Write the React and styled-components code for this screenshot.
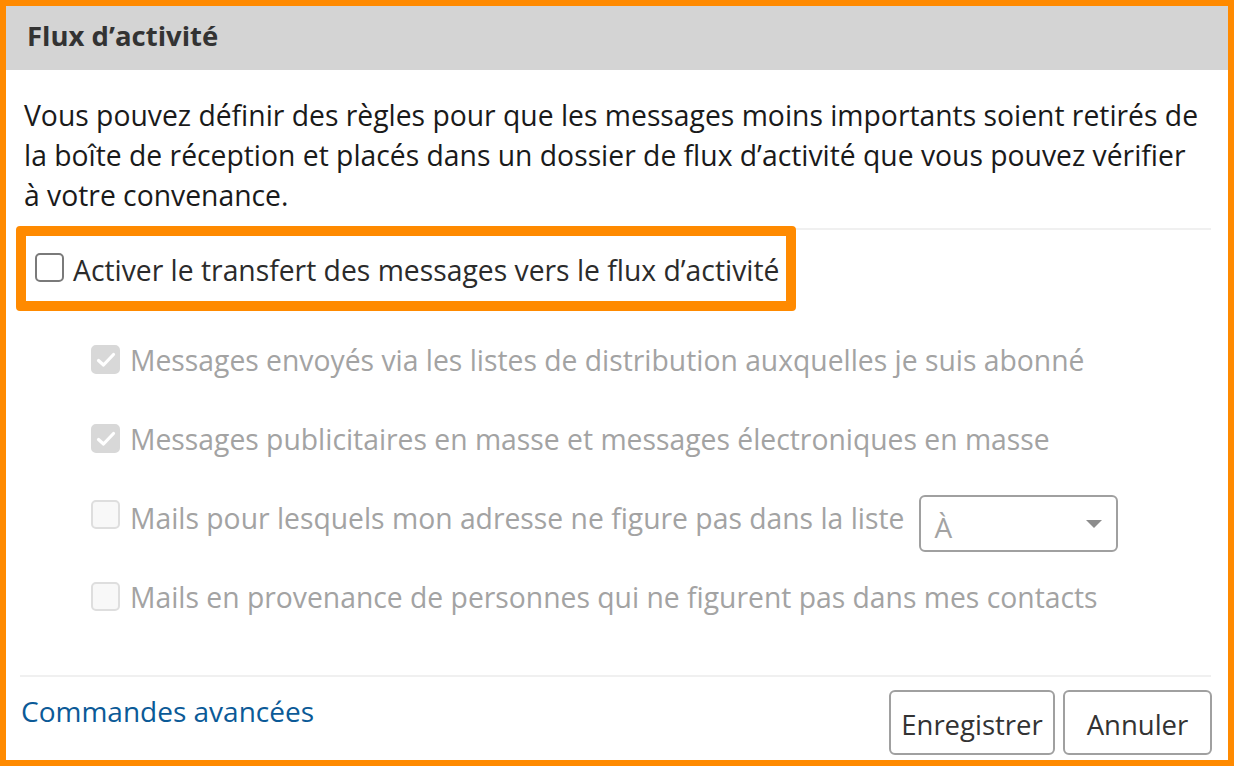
import React, { useState } from 'react';
import styled, { createGlobalStyle } from 'styled-components';

const GlobalStyle = createGlobalStyle`
  html, body {
    margin: 0;
    padding: 0;
    background: #ffffff;
  }
  body {
    font-family: "Open Sans", "Noto Sans", sans-serif;
  }
`;

const Frame = styled.div`
  width: 1234px;
  height: 766px;
  box-sizing: border-box;
  border: 6px solid #ff8a00;
  background: #ffffff;
  display: flex;
  flex-direction: column;
  overflow: hidden;
`;

const Header = styled.div`
  height: 64px;
  flex: none;
  background: #d4d4d4;
  display: flex;
  align-items: center;
  padding: 0 0 6px 21px;
  box-sizing: border-box;
`;

const Title = styled.h1`
  margin: 0;
  font-size: 27.5px;
  font-weight: 700;
  color: #333333;
`;

const Body = styled.div`
  flex: 1;
  display: flex;
  flex-direction: column;
  padding: 0 17px 0 14px;
`;

const Intro = styled.p`
  margin: 25px 0 13px 4px;
  font-size: 28.3px;
  line-height: 40px;
  color: #1a1a1a;
`;

const Line = styled.span`
  display: block;
  white-space: nowrap;
`;

const Separator = styled.div`
  height: 2px;
  background: #f0f0f0;
  flex: none;
  margin-top: ${({ top }) => top || 0}px;
`;

const Highlight = styled.div`
  align-self: flex-start;
  margin: -4px 0 0 -4px;
  border: 10px solid #ff8a00;
  border-radius: 4px;
  height: 63px;
  display: flex;
  align-items: center;
  padding: 2px 7px 0 9px;
  box-sizing: content-box;
`;

const Box = styled.span`
  width: 29px;
  height: 29px;
  box-sizing: border-box;
  flex: none;
  border-radius: 5px;
  border: 2px solid;
  background: ${({ checked, disabled }) =>
    checked ? '#d8d8d8' : disabled ? '#f8f8f8' : '#ffffff'};
  border-color: ${({ checked, disabled }) =>
    checked ? '#d8d8d8' : disabled ? '#dedede' : '#7a7a7a'};
  display: flex;
  align-items: center;
  justify-content: center;
  margin-top: ${({ offset }) => offset || 0}px;
`;

const Label = styled.span`
  font-size: 28.3px;
  color: ${({ disabled }) => (disabled ? '#a3a3a3' : '#2b2b2b')};
  margin-left: ${({ gap }) => gap}px;
  white-space: nowrap;
`;

const Options = styled.div`
  display: flex;
  flex-direction: column;
  padding: 9px 0 0 71px;
`;

const OptionRow = styled.div`
  height: 79px;
  display: flex;
  align-items: center;
`;

const Select = styled.div`
  width: 199px;
  height: 57px;
  flex: none;
  box-sizing: border-box;
  margin: 12px 0 0 15px;
  border: 2px solid #a0a0a0;
  border-radius: 6px;
  display: flex;
  align-items: center;
  justify-content: space-between;
  padding: 6px 14px 0 13px;
  font-size: 28px;
  color: #a3a3a3;
`;

const Caret = styled.span`
  width: 0;
  height: 0;
  border-left: 8px solid transparent;
  border-right: 8px solid transparent;
  border-top: 8px solid #8c8c8c;
  margin-top: -6px;
`;

const Footer = styled.div`
  margin-top: auto;
  display: flex;
  align-items: flex-start;
  justify-content: space-between;
  padding: 12px 0 5px 1px;
`;

const Link = styled.a`
  font-size: 28px;
  color: #0b5a97;
  text-decoration: none;
  margin-top: 2px;
  cursor: pointer;
`;

const Buttons = styled.div`
  display: flex;
  gap: 8px;
  margin-right: -1px;
`;

const Button = styled.button`
  height: 65px;
  width: ${({ w }) => w}px;
  box-sizing: border-box;
  background: #ffffff;
  border: 2px solid #a0a0a0;
  border-radius: 6px;
  font-family: "Open Sans", "Noto Sans", sans-serif;
  font-size: 27.5px;
  color: #333333;
  padding: 4px 0 0;
  cursor: pointer;
`;

const Check = () => (
  <svg width="20" height="16" viewBox="0 0 20 16">
    <path d="M2.5 8.5 L7.5 13 L17.5 2.5" fill="none" stroke="#ffffff" strokeWidth="3.2" strokeLinecap="round" strokeLinejoin="round" />
  </svg>
);

const options = [
  { label: 'Messages envoyés via les listes de distribution auxquelles je suis abonné', checked: true },
  { label: 'Messages publicitaires en masse et messages électroniques en masse', checked: true },
  { label: 'Mails pour lesquels mon adresse ne figure pas dans la liste', checked: false, select: true },
  { label: 'Mails en provenance de personnes qui ne figurent pas dans mes contacts', checked: false },
];

export default function App() {
  const [enabled, setEnabled] = useState(false);

  return (
    <>
      <GlobalStyle />
      <Frame>
        <Header>
          <Title>Flux d’activité</Title>
        </Header>
        <Body>
          <Intro>
            <Line>Vous pouvez définir des règles pour que les messages moins importants soient retirés de</Line>
            <Line>la boîte de réception et placés dans un dossier de flux d’activité que vous pouvez vérifier</Line>
            <Line>à votre convenance.</Line>
          </Intro>
          <Separator />
          <Highlight onClick={() => setEnabled(!enabled)}>
            <Box checked={false} offset={-5}>{enabled && <Check />}</Box>
            <Label gap={9}>Activer le transfert des messages vers le flux d’activité</Label>
          </Highlight>
          <Options>
            {options.map((o) => (
              <OptionRow key={o.label}>
                <Box checked={o.checked} disabled offset={o.select ? -6 : 0}>
                  {o.checked && <Check />}
                </Box>
                <Label gap={10} disabled>{o.label}</Label>
                {o.select && (
                  <Select>
                    <span>À</span>
                    <Caret />
                  </Select>
                )}
              </OptionRow>
            ))}
          </Options>
          <Separator top={39} />
          <Footer>
            <Link>Commandes avancées</Link>
            <Buttons>
              <Button w={166}>Enregistrer</Button>
              <Button w={149}>Annuler</Button>
            </Buttons>
          </Footer>
        </Body>
      </Frame>
    </>
  );
}
